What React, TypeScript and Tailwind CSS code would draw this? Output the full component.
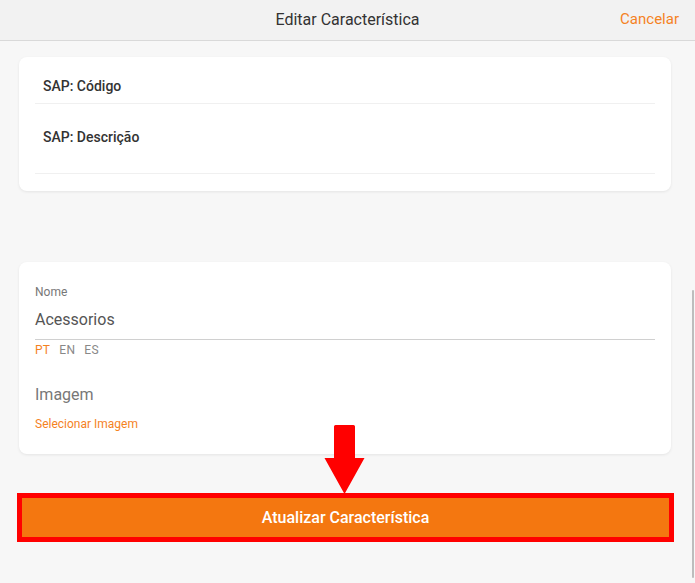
const font = { fontFamily: 'Roboto, "Noto Sans", sans-serif' };

function Header() {
  return (
    <div className="relative flex h-[41px] shrink-0 items-center justify-center border-b border-[#d9d9d9] bg-[#f2f2f2]">
      <span className="text-[16px] text-[#333]">Editar Característica</span>
      <button className="absolute right-[16px] top-[8px] text-[15px] text-[#f5821f]">Cancelar</button>
    </div>
  );
}

function SapCard() {
  return (
    <div className="mt-[16px] rounded-[8px] bg-white px-[16px] pb-[17px] shadow-[0_1px_3px_rgba(0,0,0,0.08)]">
      <div className="border-b border-[#f0f0f0] pl-[8px] pt-[19px] pb-[7px] text-[14px] leading-[20px] font-medium text-[#333]">SAP: Código</div>
      <div className="border-b border-[#f0f0f0] pl-[8px] pt-[23px] pb-[26px] text-[14px] leading-[20px] font-medium text-[#333]">SAP: Descrição</div>
    </div>
  );
}

function NameCard() {
  return (
    <div className="mt-[71px] rounded-[8px] bg-white px-[16px] pt-[22px] pb-[22px] shadow-[0_1px_3px_rgba(0,0,0,0.08)]">
      <div className="text-[12px] leading-[16px] text-[#777]">Nome</div>
      <div className="mt-[8px] border-b border-[#d0d0d0] pb-[7px] text-[16px] leading-[24px] text-[#555]">Acessorios</div>
      <div className="mt-[2px] flex gap-[9px] text-[12px] leading-[16px] tracking-wide">
        <span className="text-[#f5821f]">PT</span>
        <span className="text-[#888]">EN</span>
        <span className="text-[#888]">ES</span>
      </div>
      <div className="mt-[25px] text-[16px] leading-[24px] text-[#777]">Imagem</div>
      <div className="mt-[9px] text-[12px] leading-[16px] text-[#f5821f]">Selecionar Imagem</div>
    </div>
  );
}

function Arrow() {
  return (
    <svg className="absolute left-[324px] top-[425px]" width="41" height="69" viewBox="0 0 41 69">
      <path d="M10 1.5 Q10 0 11.5 0 H29.5 Q31 0 31 1.5 V33 H40.5 L20.5 69 L0.5 33 H10 Z" fill="#ff0000" />
    </svg>
  );
}

export default function App() {
  return (
    <div className="relative flex h-[583px] w-[695px] flex-col overflow-hidden bg-[#f7f7f7]" style={font}>
      <Header />
      <div className="pl-[19px] pr-[24px]">
        <SapCard />
        <NameCard />
      </div>
      <div className="ml-[17px] mr-[21px] mt-[39px] flex h-[49px] items-center justify-center border-[5px] border-[#ff0000] bg-[#f47710] text-[16px] font-medium text-white">
        Atualizar Característica
      </div>
      <Arrow />
      <div className="absolute right-[1px] top-[290px] h-[288px] w-[2px] rounded-full bg-[#bdbdbd]" />
    </div>
  );
}
